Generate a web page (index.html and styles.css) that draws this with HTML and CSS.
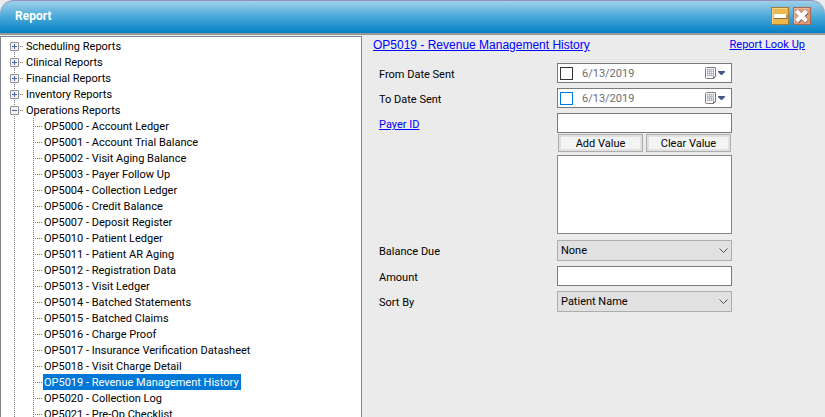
FILE: index.html
```html
<!DOCTYPE html>
<html lang="en">
<head>
<meta charset="utf-8">
<title>Report</title>
<link rel="stylesheet" href="styles.css">
</head>
<body>
<div class="window">
  <header class="titlebar">
    <h1 class="title">Report</h1>
    <div class="window-controls">
      <button class="control" type="button" aria-label="Minimize">
        <svg width="18" height="18" viewBox="0 0 18 18"><rect x=".5" y=".5" width="17" height="17" fill="#edb94c" stroke="#a87a38"/><path d="M1 1.5H16M1.5 1V16" stroke="#f7d488" fill="none"/><path d="M3 11.500H16V8" stroke="#8a6d3c" fill="none"/><rect x="3" y="7" width="12" height="4" fill="#fff"/></svg>
      </button>
      <button class="control" type="button" aria-label="Close">
        <svg width="18" height="18" viewBox="0 0 18 18"><rect x=".5" y=".5" width="17" height="17" fill="#e59a76" stroke="#a56a50"/><path d="M1 1.5H16M1.5 1V16" stroke="#efb89c" fill="none"/><path d="M4 4.500L14 14.500M14 4.500L4 14.500" stroke="#85675a" stroke-width="5"/><path d="M3.500 4L13.500 14M13.500 4L3.500 14" stroke="#fff" stroke-width="4"/></svg>
      </button>
    </div>
  </header>
  <main class="content">
    <nav class="tree-panel" aria-label="Reports">
      <ul class="tree">
        <li class="branch"><div class="node"><button class="toggle plus" type="button" aria-label="Expand"></button><span class="label">Scheduling Reports</span></div></li>
        <li class="branch"><div class="node"><button class="toggle plus" type="button" aria-label="Expand"></button><span class="label">Clinical Reports</span></div></li>
        <li class="branch"><div class="node"><button class="toggle plus" type="button" aria-label="Expand"></button><span class="label">Financial Reports</span></div></li>
        <li class="branch"><div class="node"><button class="toggle plus" type="button" aria-label="Expand"></button><span class="label">Inventory Reports</span></div></li>
        <li class="branch"><div class="node"><button class="toggle" type="button" aria-label="Collapse"></button><span class="label">Operations Reports</span></div>
          <ul class="leaves">
            <li class="leaf"><span class="label">OP5000 - Account Ledger</span></li>
            <li class="leaf"><span class="label">OP5001 - Account Trial Balance</span></li>
            <li class="leaf"><span class="label">OP5002 - Visit Aging Balance</span></li>
            <li class="leaf"><span class="label">OP5003 - Payer Follow Up</span></li>
            <li class="leaf"><span class="label">OP5004 - Collection Ledger</span></li>
            <li class="leaf"><span class="label">OP5006 - Credit Balance</span></li>
            <li class="leaf"><span class="label">OP5007 - Deposit Register</span></li>
            <li class="leaf"><span class="label">OP5010 - Patient Ledger</span></li>
            <li class="leaf"><span class="label">OP5011 - Patient AR Aging</span></li>
            <li class="leaf"><span class="label">OP5012 - Registration Data</span></li>
            <li class="leaf"><span class="label">OP5013 - Visit Ledger</span></li>
            <li class="leaf"><span class="label">OP5014 - Batched Statements</span></li>
            <li class="leaf"><span class="label">OP5015 - Batched Claims</span></li>
            <li class="leaf"><span class="label">OP5016 - Charge Proof</span></li>
            <li class="leaf"><span class="label">OP5017 - Insurance Verification Datasheet</span></li>
            <li class="leaf"><span class="label">OP5018 - Visit Charge Detail</span></li>
            <li class="leaf"><span class="label selected">OP5019 - Revenue Management History</span></li>
            <li class="leaf"><span class="label">OP5020 - Collection Log</span></li>
            <li class="leaf"><span class="label">OP5021 - Pre-Op Checklist</span></li>
          </ul>
        </li>
      </ul>
    </nav>
    <section class="details">
      <div class="details-head">
        <a class="report-link" href="#">OP5019 - Revenue Management History</a>
        <a href="#">Report Look Up</a>
      </div>
      <form class="form">
        <label for="from">From Date Sent</label>
        <div class="field date">
          <input class="check" type="checkbox" aria-label="Use from date">
          <input class="date-text" id="from" type="text" value="6/13/2019">
          <button class="picker" type="button" aria-label="Choose from date">
            <svg width="21" height="13" viewBox="0 0 21 13"><path d="M1.500 .5H10.500V9.500L8.500 11.500H1.500Q.5 11.500 .5 10.500V1.500Q.5 .5 1.500 .5Z" fill="#f7f7fa" stroke="#827b7e"/><path d="M2 2.500H9M2 4.500H9M2 6.500H9M2 8.500H9M2.500 2V9M4.500 2V9M6.500 2V9M8.500 2V9" stroke="#b3b9ca"/><path d="M8 12V9.500H11Z" fill="#6e686b"/><path d="M13 4H20V5L17 8H16L13 5Z" fill="#415983"/></svg>
          </button>
        </div>
        <label for="to">To Date Sent</label>
        <div class="field date">
          <input class="check active" type="checkbox" aria-label="Use to date">
          <input class="date-text" id="to" type="text" value="6/13/2019">
          <button class="picker" type="button" aria-label="Choose to date">
            <svg width="21" height="13" viewBox="0 0 21 13"><path d="M1.500 .5H10.500V9.500L8.500 11.500H1.500Q.5 11.500 .5 10.500V1.500Q.5 .5 1.500 .5Z" fill="#f7f7fa" stroke="#827b7e"/><path d="M2 2.500H9M2 4.500H9M2 6.500H9M2 8.500H9M2.500 2V9M4.500 2V9M6.500 2V9M8.500 2V9" stroke="#b3b9ca"/><path d="M8 12V9.500H11Z" fill="#6e686b"/><path d="M13 4H20V5L17 8H16L13 5Z" fill="#415983"/></svg>
          </button>
        </div>
        <label for="payer"><a href="#">Payer ID</a></label>
        <div class="payer">
          <input class="field" id="payer" type="text">
          <div class="actions">
            <button class="action" type="button">Add Value</button>
            <button class="action" type="button">Clear Value</button>
          </div>
          <select class="field values" multiple aria-label="Payer values"></select>
        </div>
        <label for="balance">Balance Due</label>
        <div class="dropdown">
          <select id="balance"><option>None</option></select>
          <svg class="chevron" width="9" height="6" viewBox="0 0 9 6"><path d="M.5 .5L4.500 4.500L8.500 .5" fill="none" stroke="#505050"/></svg>
        </div>
        <label for="amount">Amount</label>
        <input class="field" id="amount" type="text">
        <label for="sort">Sort By</label>
        <div class="dropdown">
          <select id="sort"><option>Patient Name</option></select>
          <svg class="chevron" width="9" height="6" viewBox="0 0 9 6"><path d="M.5 .5L4.500 4.500L8.500 .5" fill="none" stroke="#505050"/></svg>
        </div>
      </form>
    </section>
  </main>
</div>
</body>
</html>
```
FILE: styles.css
```css
* { box-sizing: border-box; }
body {
  margin: 0;
  background: #ebebeb;
  color: #000;
  font: 11px/16px Roboto, "Liberation Sans", sans-serif;
}
button, input, select { margin: 0; font: inherit; color: inherit; }
ul { margin: 0; padding: 0; list-style: none; }
a { color: #00f; }

.window {
  display: flex;
  flex-direction: column;
  height: 100vh;
  overflow: hidden;
}
.titlebar {
  display: flex;
  align-items: center;
  justify-content: space-between;
  flex: none;
  height: 35px;
  padding: 0 14px 2px 15px;
  border-top: 1px solid #9490c0;
  border-bottom: 2px solid #999;
  border-radius: 14px 14px 0 0;
  background: linear-gradient(#9fd0ea, #48a8d8 50%, #0680c6);
}
.title { margin: 0; color: #fff; font-size: 12px; font-weight: 700; }
.window-controls { display: flex; gap: 4px; }
.control { padding: 0; border: 0; background: none; }
.control svg { display: block; }

.content {
  display: grid;
  grid-template-columns: 44fr 56fr;
  flex: 1;
  min-height: 0;
  padding-top: 1px;
}
.tree-panel {
  overflow: hidden;
  margin-right: 1px;
  padding: 1px 0 0 9px;
  border: solid #828790;
  border-width: 1px 1px 0;
  background: #fff;
}
.branch {
  background: repeating-linear-gradient(#808080 0 1px, transparent 1px 2px) 4px 0 / 1px 100% no-repeat;
}
.branch:first-child { background-position: 4px 8px; }
.node { display: flex; align-items: center; height: 16px; }
.node::before {
  content: "";
  order: 1;
  width: 5px;
  height: 1px;
  background: repeating-linear-gradient(90deg, transparent 0 1px, #808080 1px 2px);
}
.node .label { order: 2; padding-left: 2px; }
.toggle {
  width: 9px;
  height: 9px;
  padding: 0;
  border: 1px solid #919191;
  border-radius: 1px;
  background: linear-gradient(#4b63a7, #4b63a7) center / 5px 1px no-repeat, #f3f3f3;
}
.plus {
  background:
    linear-gradient(#4b63a7, #4b63a7) center / 5px 1px no-repeat,
    linear-gradient(#4b63a7, #4b63a7) center / 1px 5px no-repeat,
    #f3f3f3;
}
.label {
  height: 16px;
  padding: 0 2px 0 1px;
  line-height: 18px;
  white-space: nowrap;
}
.leaves {
  margin-left: 23px;
  background: repeating-linear-gradient(#808080 0 1px, transparent 1px 2px) 0 0 / 1px 100% no-repeat;
}
.leaf { display: flex; align-items: center; height: 16px; }
.leaf::before {
  content: "";
  width: 10px;
  height: 1px;
  background: repeating-linear-gradient(90deg, #808080 0 1px, transparent 1px 2px);
}
.selected { background: #0078d7; color: #fff; }

.details { padding: 1px 20px 0 10px; }
.details-head {
  display: flex;
  align-items: center;
  justify-content: space-between;
  height: 16px;
  line-height: 18px;
}
.report-link { font-family: "Liberation Sans", sans-serif; font-size: 12px; }
.form {
  display: grid;
  grid-template-columns: 178px 175px;
  row-gap: 5px;
  padding: 10px 0 0 6px;
}
.form > label { padding-top: 4px; }
.field {
  display: block;
  width: 100%;
  height: 20px;
  padding: 0 2px;
  border: 1px solid #7a7a7a;
  border-radius: 0;
  background: #fff;
}
.date { display: flex; align-items: center; padding-right: 5px; }
.check {
  flex: none;
  width: 13px;
  height: 13px;
  appearance: none;
  border: 1px solid #333;
  background: #fff;
}
.active { border-color: #0078d7; }
.date-text {
  flex: 1;
  min-width: 0;
  padding: 1px 0 0 9px;
  border: 0;
  background: none;
  color: #6d6d6d;
}
.picker { padding: 0; border: 0; background: none; }
.picker svg { display: block; }
.actions { display: flex; gap: 3px; padding: 1px 1px 3px; }
.action {
  flex: 1;
  height: 18px;
  padding: 1px 0 0;
  border: 1px solid #adadad;
  background: #f4f4f4;
  box-shadow: inset 0 0 0 2px #e1e1e1;
  line-height: 16px;
  white-space: nowrap;
}
.values { height: 79px; appearance: none; border-color: #828790; }
.payer { padding-bottom: 1px; }
.dropdown { display: grid; align-items: center; }
.dropdown select, .chevron { grid-area: 1 / 1; }
.dropdown select {
  width: 100%;
  height: 21px;
  padding: 1px 20px 0 3px;
  appearance: none;
  border: 1px solid #adadad;
  border-radius: 0;
  background: #e1e1e1;
}
.chevron { justify-self: end; margin-right: 4px; pointer-events: none; }
```
